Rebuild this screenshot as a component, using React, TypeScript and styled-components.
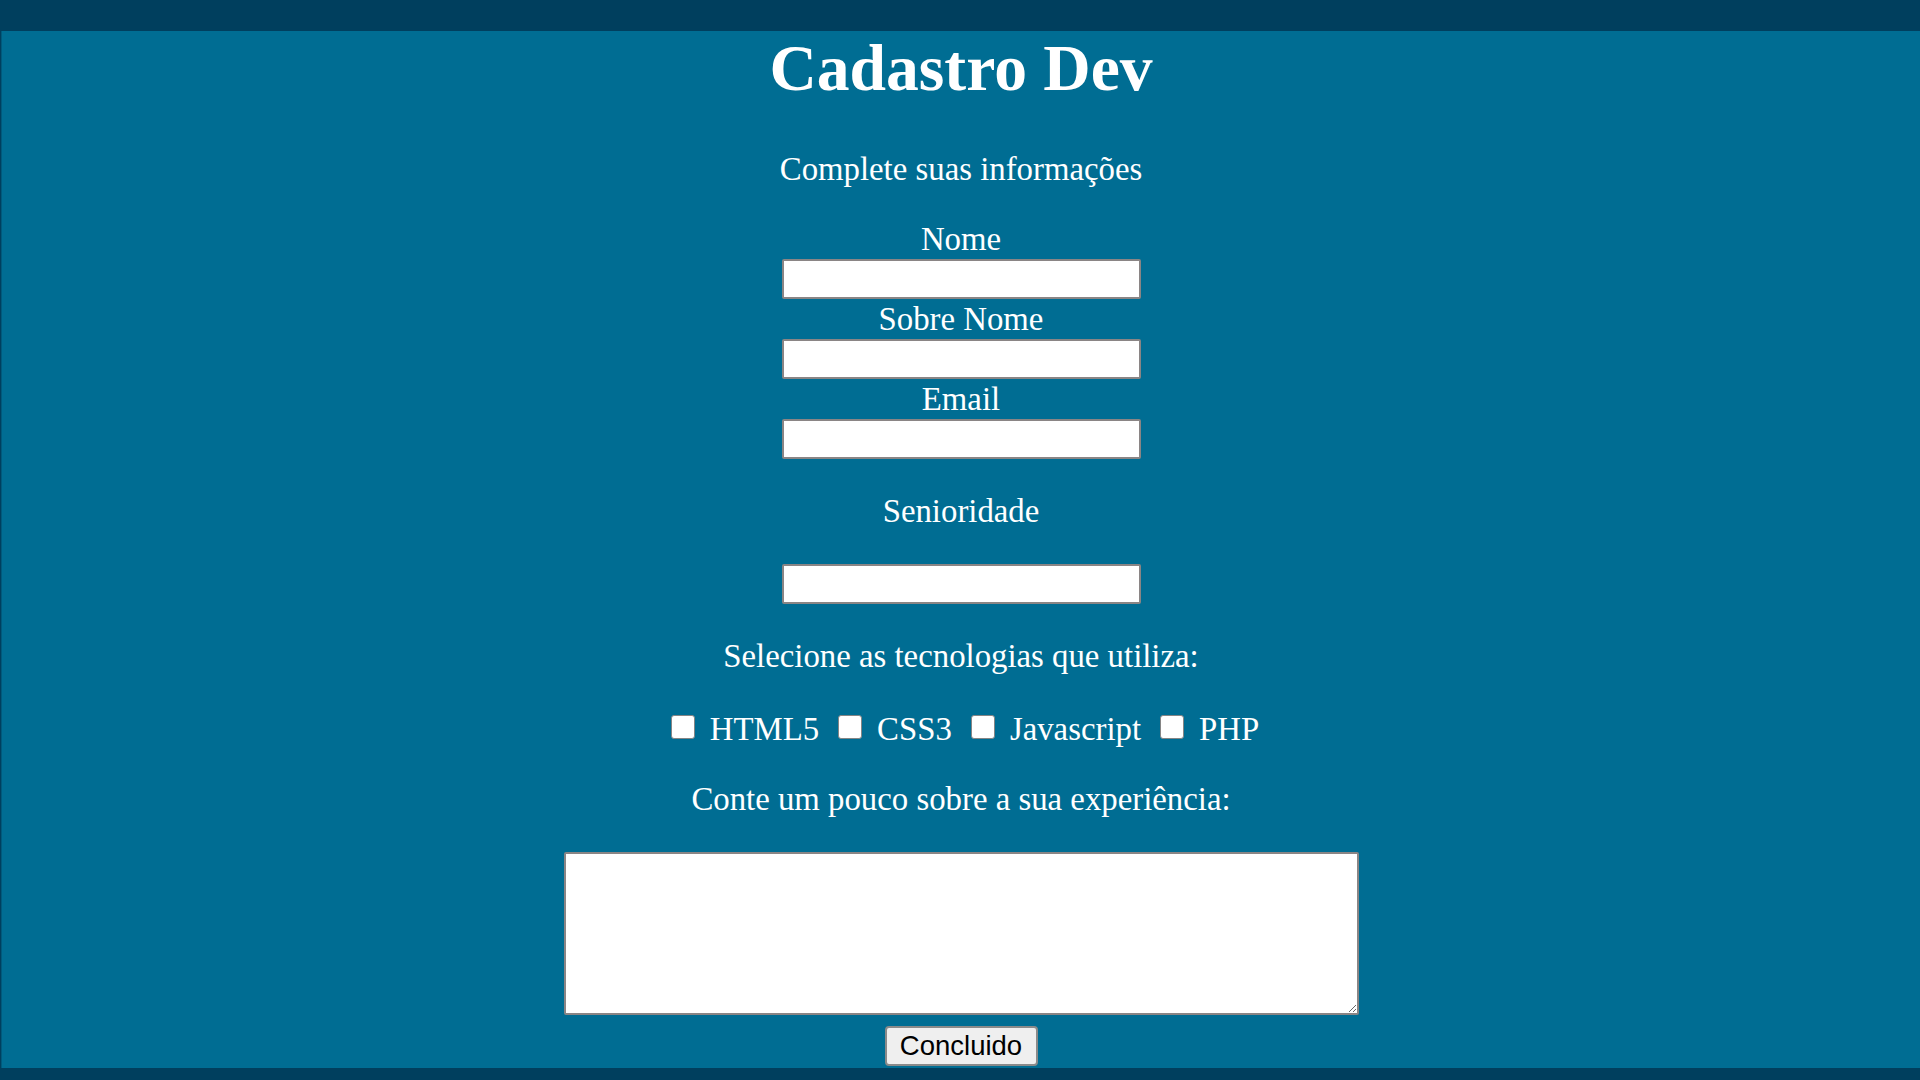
import React from "react";
import styled, { createGlobalStyle } from "styled-components";

const GlobalStyle = createGlobalStyle`
  html, body {
    margin: 0;
    background: #003f5e;
  }
  body {
    padding: 31px 0 12px 1px;
    font-family: "Liberation Serif", "Times New Roman", serif;
  }
`;

const Page = styled.main`
  background: #006d93;
  border-left: 1px solid #005a7c;
  display: flex;
  flex-direction: column;
  align-items: center;
  padding-bottom: 2px;
  color: #ffffff;
  font-family: "Liberation Serif", "Times New Roman", serif;
  font-size: 32.8px;
  line-height: 40px;
`;

const Title = styled.h1`
  margin: 0 0 44px;
  font-size: 65.6px;
  line-height: 74px;
  font-weight: bold;
`;

const Line = styled.p<{ $top?: number }>`
  margin: ${(p) => p.$top ?? 0}px 0 0;
  height: 40px;
  text-align: center;
  white-space: nowrap;
`;

const FieldLabel = styled.label<{ $top?: number }>`
  display: block;
  margin-top: ${(p) => p.$top ?? 0}px;
  height: 40px;
  text-align: center;
`;

const TextInput = styled.input<{ $top?: number }>`
  box-sizing: border-box;
  display: block;
  margin: ${(p) => p.$top ?? 0}px 0 0;
  width: 359px;
  height: 40px;
  background: #ffffff;
  border: 2px solid #8a8585;
  border-radius: 2px;
  padding: 2px 6px;
  font-size: 26px;
  font-family: "Liberation Sans", Arial, sans-serif;
`;

const CheckRow = styled.div`
  margin-top: 33px;
  height: 40px;
  display: flex;
  align-items: flex-start;
  gap: 19px;
  padding-left: 8px;
`;

const CheckItem = styled.label`
  display: flex;
  align-items: flex-start;
  gap: 15px;
  white-space: nowrap;
`;

const Box = styled.input`
  appearance: none;
  -webkit-appearance: none;
  box-sizing: border-box;
  margin: 6px 0 0;
  width: 24px;
  height: 24px;
  background: #ffffff;
  border: 1.5px solid #858585;
  border-radius: 3px;
`;

const Experience = styled.textarea`
  box-sizing: border-box;
  display: block;
  margin-top: 33px;
  width: 795px;
  height: 163px;
  background: #ffffff;
  border: 2px solid #8a8585;
  border-radius: 2px;
`;

const Submit = styled.button`
  box-sizing: border-box;
  margin-top: 11px;
  width: 153px;
  height: 40px;
  background: #efefef;
  color: #000000;
  border: 2px solid #8a8a8a;
  border-radius: 4px;
  font-family: "Liberation Sans", Arial, sans-serif;
  font-size: 27.5px;
  line-height: 1;
  padding: 0;
`;

const techs = ["HTML5", "CSS3", "Javascript", "PHP"];

export default function App() {
  return (
    <>
      <GlobalStyle />
      <Page>
        <Title>Cadastro Dev</Title>
        <Line>Complete suas informações</Line>
        <FieldLabel $top={30} htmlFor="nome">Nome</FieldLabel>
        <TextInput id="nome" type="text" />
        <FieldLabel htmlFor="sobrenome">Sobre Nome</FieldLabel>
        <TextInput id="sobrenome" type="text" />
        <FieldLabel htmlFor="email">Email</FieldLabel>
        <TextInput id="email" type="email" />
        <FieldLabel $top={32} htmlFor="senioridade">Senioridade</FieldLabel>
        <TextInput id="senioridade" type="text" $top={33} />
        <Line $top={32}>Selecione as tecnologias que utiliza:</Line>
        <CheckRow>
          {techs.map((t) => (
            <CheckItem key={t}>
              <Box type="checkbox" />
              {t}
            </CheckItem>
          ))}
        </CheckRow>
        <Line $top={30}>Conte um pouco sobre a sua experiência:</Line>
        <Experience />
        <Submit type="button">Concluido</Submit>
      </Page>
    </>
  );
}
